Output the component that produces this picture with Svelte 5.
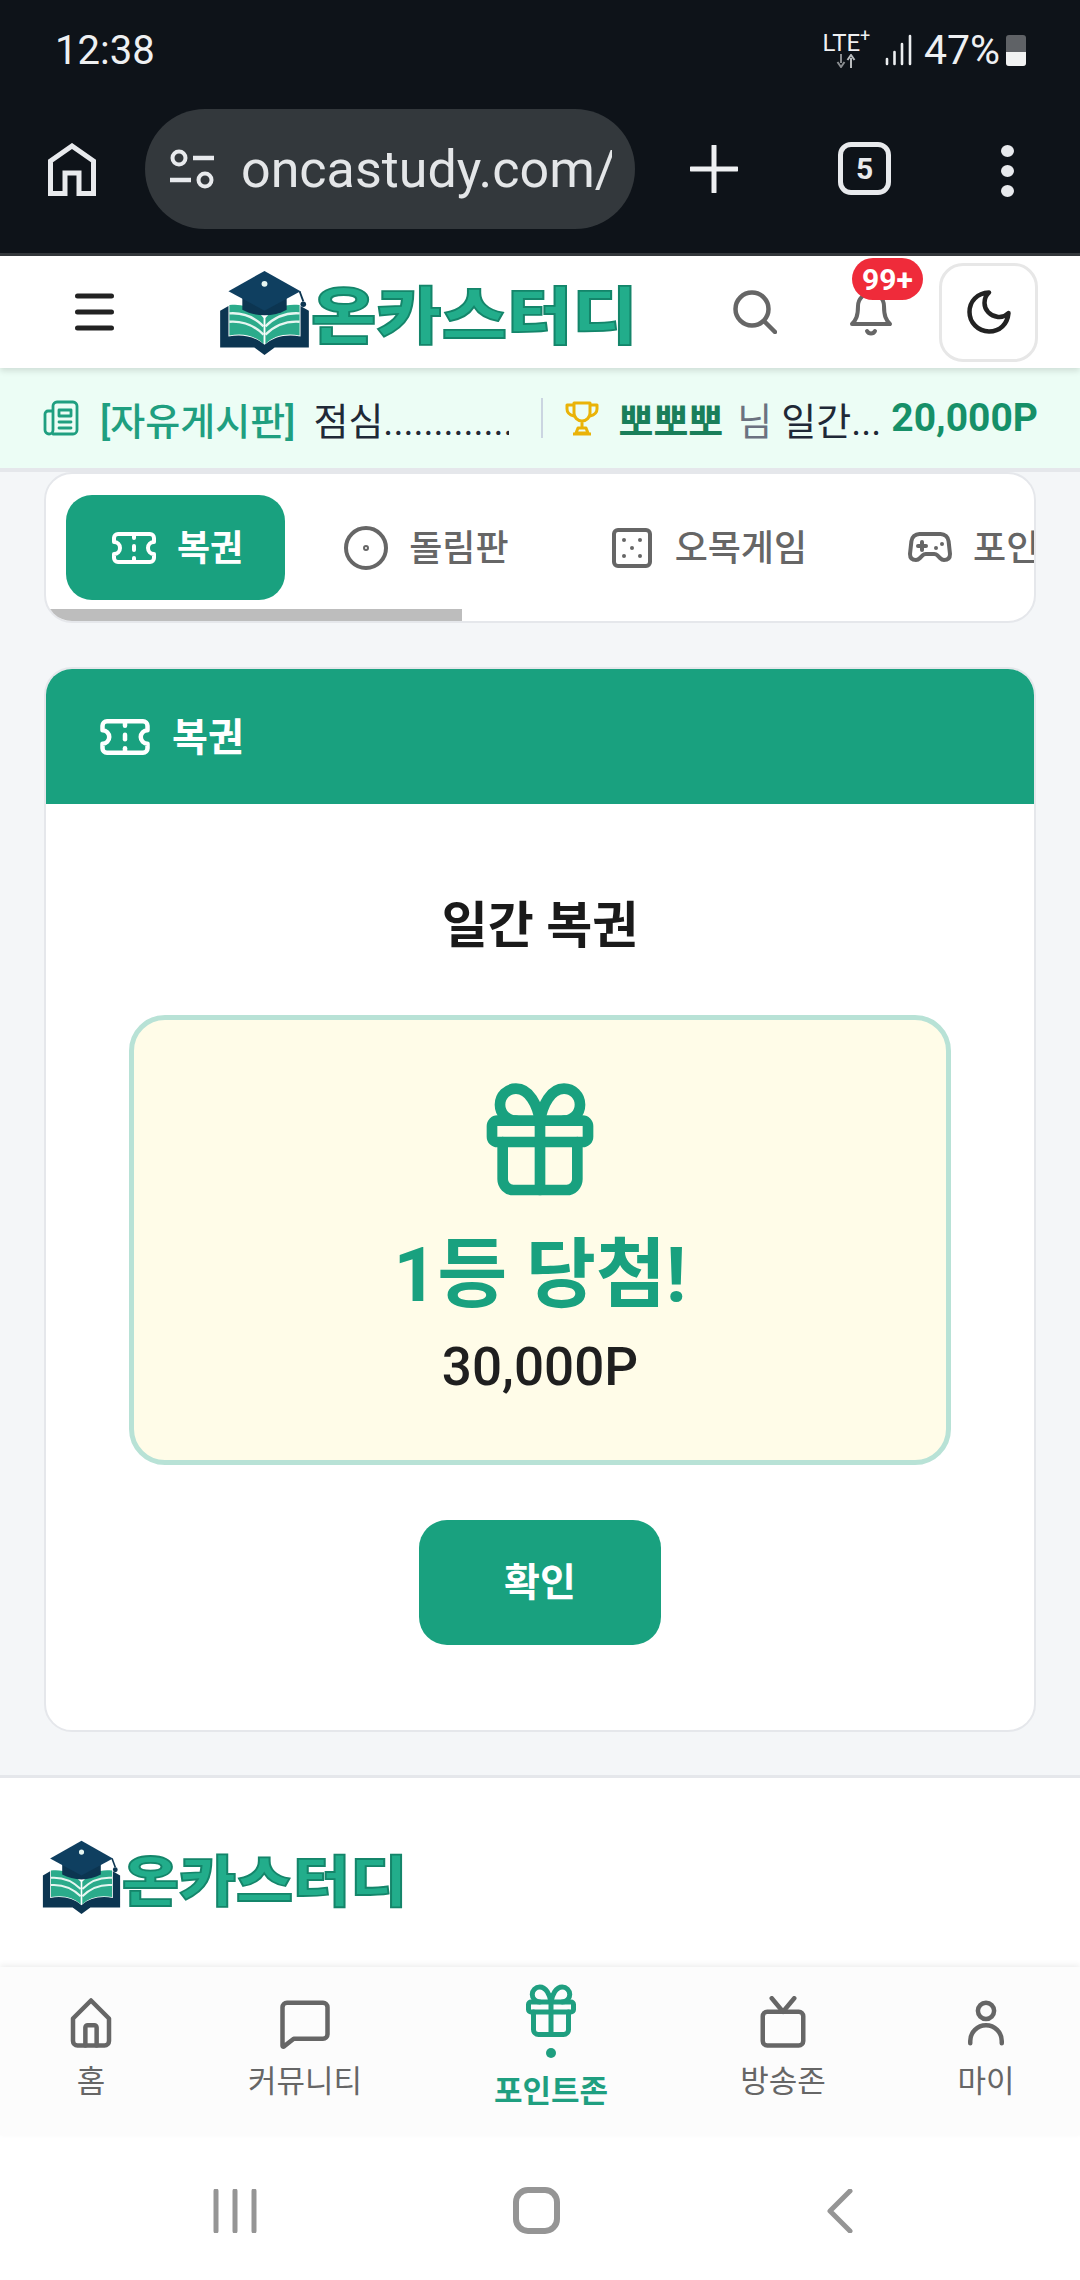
<script>
  const ticket = [
    "M2 9a3 3 0 0 1 0 6v2a2 2 0 0 0 2 2h16a2 2 0 0 0 2-2v-2a3 3 0 0 1 0-6V7a2 2 0 0 0-2-2H4a2 2 0 0 0-2 2Z",
    "M12 5v2",
    "M12 11v2",
    "M12 17v2",
  ];
  const gift = [
    "M4 8h16a1 1 0 0 1 1 1v2a1 1 0 0 1-1 1H4a1 1 0 0 1-1-1V9a1 1 0 0 1 1-1Z",
    "M12 8v13",
    "M19 12v7a2 2 0 0 1-2 2H7a2 2 0 0 1-2-2v-7",
    "M7.5 8a3 3 0 0 1 0-6c2.500 0 4 3 4.500 6 .5-3 2-6 4.500-6a3 3 0 0 1 0 6",
  ];
  const tabs = [
    { label: "복권", active: true, paths: ticket },
    { label: "돌림판", paths: ["M12 2a10 10 0 1 0 0 20a10 10 0 1 0 0-20Z", "M12 11.5a.5.5 0 1 0 0 1a.5.5 0 1 0 0-1Z"] },
    {
      label: "오목게임",
      paths: [
        "M5 3h14a2 2 0 0 1 2 2v14a2 2 0 0 1-2 2H5a2 2 0 0 1-2-2V5a2 2 0 0 1 2-2Z",
        "M8 8h.01",
        "M16 8h.01",
        "M12 12h.01",
        "M8 16h.01",
        "M16 16h.01",
      ],
    },
    {
      label: "포인트",
      paths: [
        "M6 11h4",
        "M8 9v4",
        "M15 12h.01",
        "M18 10h.01",
        "M17.32 5H6.68a4 4 0 0 0-3.98 3.59L2 15c0 2 1 3 3 3 1 0 1.5-.5 2-1l1.41-1.41A2 2 0 0 1 9.83 15h4.34a2 2 0 0 1 1.42.59L17 17c.5.5 1 1 2 1 2 0 3-1 3-3l-.7-6.41A4 4 0 0 0 17.32 5Z",
      ],
    },
  ];
  const navItems = [
    { label: "홈", paths: ["M4 10l8-8 8 8v10a2 2 0 0 1-2 2H6a2 2 0 0 1-2-2Z", "M9.500 22v-8a1 1 0 0 1 1-1h3a1 1 0 0 1 1 1v8"] },
    { label: "커뮤니티", paths: ["M22 17a2 2 0 0 1-2 2H7l-4.5 3.5A.5.5 0 0 1 2 22V5a2 2 0 0 1 2-2h16a2 2 0 0 1 2 2Z"] },
    { label: "포인트존", active: true, paths: gift },
    { label: "방송존", paths: ["M5 7h14a2 2 0 0 1 2 2v11a2 2 0 0 1-2 2H5a2 2 0 0 1-2-2V9a2 2 0 0 1 2-2Z", "M17 1l-5 6-5-6"] },
    { label: "마이", paths: ["M12 3a3.600 3.600 0 1 0 0 7.200a3.600 3.600 0 1 0 0-7.200Z", "M5 21v-1a7 7 0 0 1 14 0v1"] },
  ];
</script>

{#snippet icon(paths, cls)}
  <svg class={cls} viewBox="0 0 24 24" fill="none" stroke="currentColor" stroke-width="2" stroke-linecap="round" stroke-linejoin="round">
    {#each paths as d}<path {d} />{/each}
  </svg>
{/snippet}

{#snippet logo(small)}
  <div class="logo" class:small>
    <svg class="emblem" viewBox="0 0 100 92">
      <path fill="#0c3551" d="M2 84V44l9-5v33c15-3 29 0 39 9 10-9 24-12 39-9V39l9 5v40H61l-11 8-11-8Z" />
      <path fill="#2bab8b" d="M12 38c14-2 28 3 37 14v28c-9-9-23-12-37-9Z" />
      <path fill="#2bab8b" d="M88 38c-14-2-28 3-37 14v28c9-9 23-12 37-9Z" />
      <path fill="none" stroke="#e6f6f1" stroke-width="2.600" d="M12 47c14-1 27 4 37 14M12 56c14-1 27 4 37 14M88 47c-14-1-27 4-37 14M88 56c-14-1-27 4-37 14" />
      <path fill="#0c3551" d="M26 30v13c14 8 34 8 48 0V30Z" />
      <path fill="#0f3f60" d="M50 1l39 22-39 21-39-21Z" />
      <circle cx="50" cy="15" r="3.200" fill="#e6f6f1" />
      <path fill="none" stroke="#0c3551" stroke-width="2" d="M88 23l4 11" />
      <circle cx="92" cy="37" r="3" fill="#0c3551" />
    </svg>
    <span class="logo-text">온카스터디</span>
  </div>
{/snippet}

<div class="phone">
  <div class="status">
    <span class="clock">12:38</span>
    <div class="status-right">
      <div class="lte">
        <span>LTE<sup>+</sup></span>
        <svg viewBox="0 0 22 14" class="lte-arrows">
          <path d="M6 0v9M2.500 8L6 13l3.500-5" stroke="#8a8d90" stroke-width="2" fill="none" />
          <path d="M16 14V4M12.500 6L16 1l3.500 5" stroke="#b9bcbe" stroke-width="2" fill="none" />
        </svg>
      </div>
      <svg viewBox="0 0 27 32" class="signal">
        <path d="M2 25v5M9.500 18v12M17 10v20M25 2v28" stroke="#eceef0" stroke-width="2.600" stroke-linecap="round" />
      </svg>
      <span class="pct">47%</span>
      <div class="battery"><div class="battery-fill"></div></div>
    </div>
  </div>

  <div class="toolbar">
    <svg viewBox="0 0 48 53" class="tb-home">
      <path d="M2.500 50.500V18L24 3l21.500 15v32.500H31V30H17v20.500Z" fill="none" stroke="#e8eaed" stroke-width="5" />
    </svg>
    <div class="url">
      <svg viewBox="0 0 44 40" class="tune">
        <circle cx="9" cy="9" r="6.500" fill="none" stroke="#e8eaed" stroke-width="4" />
        <path d="M23 9h21M0 31h21" stroke="#e8eaed" stroke-width="4.500" />
        <circle cx="35" cy="31" r="6.500" fill="none" stroke="#e8eaed" stroke-width="4" />
      </svg>
      <span class="url-text">oncastudy.com/</span>
    </div>
    <svg viewBox="0 0 48 48" class="tb-plus">
      <path d="M24 1v46M1 24h46" stroke="#eef0f2" stroke-width="5" stroke-linecap="round" />
    </svg>
    <div class="tab-count">5</div>
    <div class="tb-dots"><i></i><i></i><i></i></div>
  </div>

  <div class="header">
    <svg viewBox="0 0 39 38" class="menu">
      <path d="M2.500 3h34M2.500 19h34M2.500 35h34" stroke="#222" stroke-width="5" stroke-linecap="round" />
    </svg>
    {@render logo(false)}
    <svg viewBox="0 0 44 44" class="search">
      <circle cx="19" cy="19" r="16.500" fill="none" stroke="#666" stroke-width="4.500" />
      <path d="M31 31l11 11" stroke="#666" stroke-width="4.500" stroke-linecap="round" />
    </svg>
    <div class="bell">
      <svg viewBox="0 0 44 50">
        <path d="M3 37c4-4 6-8 6-18a13 13 0 0 1 26 0c0 10 2 14 6 18Z" fill="none" stroke="#666" stroke-width="4" stroke-linejoin="round" />
        <path d="M18 44a4.500 4.500 0 0 0 8 0" fill="none" stroke="#666" stroke-width="4" stroke-linecap="round" />
      </svg>
      <span class="badge">99+</span>
    </div>
    <div class="moon-box">
      <svg viewBox="0 0 44 44" class="moon">
        <path d="M22 2.500C10 3 2.500 11.500 2.500 22S11 41.500 22 41.500 40.500 34 41.500 23c-3 3-7 4.500-10.500 4C23 26 17.500 20 17.500 13c0-4 1.500-8 4.500-10.500Z" fill="none" stroke="#222" stroke-width="4.500" stroke-linejoin="round" />
      </svg>
    </div>
  </div>

  <div class="ticker">
    <svg viewBox="0 0 36 36" class="news">
      <path d="M10 34h20a4 4 0 0 0 4-4V6a4 4 0 0 0-4-4H14a4 4 0 0 0-4 4v24a4 4 0 0 1-8 0V14a3 3 0 0 1 3-3h5M16 10h12v6H16ZM16 22h12M16 28h12" fill="none" stroke="#1f9f80" stroke-width="2.800" stroke-linejoin="round" stroke-linecap="round" />
    </svg>
    <span class="t-tag">[자유게시판]</span>
    <span class="t-post">점심.............</span>
    <i class="t-div"></i>
    <svg viewBox="0 0 34 36" class="trophy">
      <path d="M9 3h16v10a8 8 0 0 1-16 0ZM9 5H2v4c0 4 3 6 7 7M25 5h7v4c0 4-3 6-7 7M17 21v7M11 33l2-5h8l2 5Z" fill="none" stroke="#eab308" stroke-width="3" stroke-linejoin="round" />
      <path d="M8 34h18" stroke="#eab308" stroke-width="3" />
    </svg>
    <span class="t-name">뽀뽀뽀</span>
    <span class="t-nim">님</span>
    <span class="t-desc">일간...</span>
    <span class="t-point">20,000P</span>
  </div>

  <div class="content">
    <div class="tabs">
      <div class="tab-row">
        {#each tabs as tab}
          <div class="tab" class:active={tab.active}>
            {@render icon(tab.paths, "tab-icon")}
            <span>{tab.label}</span>
          </div>
        {/each}
      </div>
      <div class="scroll-thumb"></div>
    </div>

    <div class="card">
      <div class="card-head">
        {@render icon(ticket, "head-icon")}
        <span>복권</span>
      </div>
      <div class="card-body">
        <h2>일간 복권</h2>
        <div class="prize">
          {@render icon(gift, "prize-icon")}
          <div class="prize-title">1등 당첨!</div>
          <div class="prize-amount">30,000P</div>
        </div>
        <button class="confirm">확인</button>
      </div>
    </div>
  </div>

  <div class="footer">
    {@render logo(true)}
  </div>

  <div class="nav">
    {#each navItems as item}
      <div class="nav-item" class:active={item.active}>
        {@render icon(item.paths, "nav-icon")}
        {#if item.active}<i class="nav-dot"></i>{/if}
        <span>{item.label}</span>
      </div>
    {/each}
  </div>

  <div class="sysnav">
    <svg viewBox="0 0 44 44" class="sys-recent">
      <path d="M3 2v40M22 2v40M41 2v40" stroke="#959595" stroke-width="5" stroke-linecap="round" />
    </svg>
    <div class="sys-home"></div>
    <svg viewBox="0 0 27 44" class="sys-back">
      <path d="M24 2L4 22l20 20" fill="none" stroke="#959595" stroke-width="5" stroke-linecap="round" stroke-linejoin="round" />
    </svg>
  </div>
</div>

<style>
  :global(body) {
    margin: 0;
    background: #fff;
  }
  .phone {
    width: 1080px;
    height: 2280px;
    overflow: hidden;
    display: flex;
    flex-direction: column;
    font-family: Roboto, "Noto Sans CJK KR", sans-serif;
    color: #1a1a1a;
  }

  .status {
    height: 100px;
    flex: none;
    background: #0e1319;
    color: #eef0f2;
    display: flex;
    align-items: center;
    justify-content: space-between;
    padding: 0 54px 0 55px;
    box-sizing: border-box;
  }
  .clock {
    font-size: 40px;
  }
  .pct {
    font-size: 41px;
  }
  .status-right {
    display: flex;
    align-items: center;
  }
  .lte {
    width: 53px;
    display: flex;
    flex-direction: column;
    align-items: center;
    font-size: 24px;
    line-height: 22px;
    margin-right: 12px;
  }
  .lte sup {
    font-size: 18px;
    line-height: 0;
  }
  .lte-arrows {
    width: 22px;
    height: 14px;
  }
  .signal {
    width: 27px;
    height: 32px;
    margin-right: 12px;
  }
  .battery {
    width: 20px;
    height: 31px;
    margin-left: 6px;
    background: #5f6266;
    border-radius: 3px;
    display: flex;
    align-items: flex-end;
    overflow: hidden;
  }
  .battery-fill {
    width: 100%;
    height: 14px;
    background: #f1f2f2;
  }

  .toolbar {
    height: 156px;
    flex: none;
    background: #0e1319;
    border-bottom: 3px solid #34383c;
    box-sizing: border-box;
    display: flex;
    align-items: flex-start;
    padding-top: 9px;
  }
  .tb-home {
    width: 48px;
    height: 53px;
    margin: 34px 49px 0 48px;
  }
  .url {
    width: 490px;
    height: 120px;
    border-radius: 60px;
    background: #33383c;
    display: flex;
    align-items: center;
    padding: 0 23px 0 25px;
    box-sizing: border-box;
    overflow: hidden;
    color: #e4e6e8;
  }
  .tune {
    width: 44px;
    height: 40px;
    flex: none;
    margin-right: 27px;
  }
  .url-text {
    font-size: 52px;
    white-space: nowrap;
    overflow: hidden;
  }
  .tb-plus {
    width: 48px;
    height: 48px;
    margin: 36px 0 0 55px;
  }
  .tab-count {
    width: 53px;
    height: 53px;
    box-sizing: border-box;
    border: 5px solid #e8eaed;
    border-radius: 13px;
    margin: 33px 0 0 100px;
    color: #e8eaed;
    font-size: 30px;
    font-weight: 700;
    display: flex;
    align-items: center;
    justify-content: center;
  }
  .tb-dots {
    margin: 36px 0 0 110px;
    display: flex;
    flex-direction: column;
    gap: 8px;
  }
  .tb-dots i {
    width: 13px;
    height: 12px;
    border-radius: 50%;
    background: #e8eaed;
  }

  .header {
    height: 112px;
    flex: none;
    background: #fff;
    display: flex;
    align-items: center;
    position: relative;
    z-index: 2;
    box-shadow: 0 3px 6px rgba(0, 0, 0, 0.12);
  }
  .menu {
    width: 39px;
    height: 38px;
    margin-left: 75px;
    margin-right: 104px;
  }
  .logo {
    display: flex;
    align-items: center;
    width: 417px;
    flex: none;
  }
  .emblem {
    width: 93px;
    height: 85px;
    flex: none;
  }
  .logo-text {
    font-family: "Noto Sans CJK KR", sans-serif;
    font-weight: 900;
    font-size: 71px;
    line-height: 1;
    white-space: nowrap;
    color: #22ad8b;
    -webkit-text-stroke: 2px #14856a;
    transform: scaleY(0.88);
  }
  .logo.small {
    width: 362px;
  }
  .logo.small .emblem {
    width: 81px;
    height: 74px;
  }
  .logo.small .logo-text {
    font-size: 62px;
  }
  .search {
    width: 44px;
    height: 44px;
    margin-left: 98px;
    flex: none;
  }
  .bell {
    width: 44px;
    height: 50px;
    margin-left: 72px;
    flex: none;
    position: relative;
  }
  .bell svg {
    width: 44px;
    height: 50px;
    display: block;
  }
  .badge {
    position: absolute;
    top: -29px;
    left: 3px;
    width: 71px;
    height: 42px;
    border-radius: 21px;
    background: #ef2b3a;
    color: #fff;
    font-size: 30px;
    font-weight: 700;
    display: flex;
    align-items: center;
    justify-content: center;
  }
  .moon-box {
    width: 99px;
    height: 99px;
    box-sizing: border-box;
    border: 3px solid #e7e7e7;
    border-radius: 24px;
    margin-left: 46px;
    flex: none;
    display: flex;
    align-items: center;
    justify-content: center;
  }
  .moon {
    width: 44px;
    height: 44px;
  }

  .ticker {
    height: 100px;
    background: #ecfdf5;
    display: flex;
    align-items: center;
    font-size: 38px;
    white-space: nowrap;
    color: #1f2937;
    flex: none;
  }
  .news {
    width: 36px;
    height: 36px;
    margin-left: 43px;
  }
  .t-tag {
    margin-left: 21px;
    color: #1f9f80;
    font-weight: 500;
  }
  .t-post {
    margin-left: 18px;
    width: 196px;
    overflow: hidden;
  }
  .t-div {
    width: 2px;
    height: 40px;
    background: #cbd5e1;
    margin: 0 22px 0 32px;
  }
  .trophy {
    width: 34px;
    height: 36px;
  }
  .t-name {
    margin-left: 19px;
    color: #1a7f5a;
    font-weight: 700;
  }
  .t-nim {
    margin-left: 14px;
    color: #6b7280;
  }
  .t-desc {
    margin-left: 9px;
    width: 92px;
  }
  .t-point {
    margin-left: 18px;
    color: #169068;
    font-size: 39px;
    font-weight: 700;
  }

  .content {
    flex: 1;
    background: #f4f6f8;
    border-top: 4px solid #e5e7eb;
    border-bottom: 3px solid #e5e7eb;
    padding: 0 44px;
    min-height: 0;
  }
  .tabs {
    background: #fff;
    border: 2px solid #e5e7eb;
    border-radius: 28px;
    overflow: hidden;
    height: 151px;
    box-sizing: border-box;
  }
  .tab-row {
    display: flex;
    gap: 13px;
    padding: 21px 0 0 20px;
    white-space: nowrap;
  }
  .tab {
    height: 105px;
    flex: none;
    padding: 0 42px 0 44px;
    border-radius: 26px;
    display: flex;
    align-items: center;
    gap: 19px;
    font-size: 36px;
    font-weight: 500;
    color: #666;
  }
  .tab span {
    margin-top: -5px;
  }
  .tab.active {
    background: #19a17f;
    color: #fff;
    font-weight: 700;
  }
  :global(.tab-icon) {
    width: 48px;
    height: 48px;
    flex: none;
  }
  .scroll-thumb {
    width: 416px;
    height: 12px;
    margin-top: 9px;
    background: #bdbdbd;
  }

  .card {
    margin-top: 44px;
    background: #fff;
    border: 2px solid #e5e7eb;
    border-radius: 28px;
    overflow: hidden;
    height: 1065px;
    box-sizing: border-box;
  }
  .card-head {
    height: 135px;
    background: #19a17f;
    color: #fff;
    display: flex;
    align-items: center;
    gap: 20px;
    padding: 0 0 0 52px;
    font-size: 39px;
    font-weight: 700;
  }
  .card-head span {
    margin-top: -5px;
  }
  :global(.head-icon) {
    width: 54px;
    height: 54px;
    flex: none;
  }
  .card-body {
    display: flex;
    flex-direction: column;
    align-items: center;
  }
  h2 {
    margin: 87px 0 0;
    font-size: 50px;
    font-weight: 700;
    line-height: 70px;
  }
  .prize {
    margin-top: 54px;
    width: 822px;
    height: 450px;
    box-sizing: border-box;
    border: 5px solid #b8e2d6;
    border-radius: 36px;
    background: #fffce8;
    display: flex;
    flex-direction: column;
    align-items: center;
    padding-top: 58px;
    color: #19a17f;
  }
  :global(.prize-icon) {
    width: 128px;
    height: 128px;
    flex: none;
    display: block;
  }
  .prize-title {
    font-size: 76px;
    font-weight: 700;
    line-height: 90px;
    margin-top: 24px;
  }
  .prize-amount {
    font-size: 53px;
    font-weight: 500;
    line-height: 70px;
    margin-top: 12px;
    color: #1f1f1f;
  }
  .confirm {
    margin-top: 55px;
    width: 242px;
    height: 125px;
    border: 0;
    border-radius: 28px;
    background: #19a17f;
    color: #fff;
    font-family: inherit;
    font-size: 39px;
    font-weight: 700;
    padding: 0 0 7px;
  }

  .footer {
    height: 189px;
    flex: none;
    background: #fff;
    padding: 62px 0 0 41px;
    box-sizing: border-box;
  }

  .nav {
    height: 168px;
    flex: none;
    background: #fcfcfc;
    display: grid;
    grid-template-columns: 182px 246px 246px 218px 188px;
    box-shadow: 0 -2px 6px rgba(0, 0, 0, 0.07);
    position: relative;
  }
  .nav-item {
    display: flex;
    flex-direction: column;
    align-items: center;
    padding-top: 29px;
    color: #666;
    font-size: 31px;
    line-height: 40px;
  }
  :global(.nav-icon) {
    width: 54px;
    height: 54px;
    flex: none;
    margin-bottom: 12px;
  }
  .nav-item.active {
    padding-top: 15px;
    color: #1f9f80;
    font-weight: 700;
  }
  .nav-item.active :global(.nav-icon) {
    width: 60px;
    height: 60px;
    margin-bottom: 6px;
  }
  .nav-dot {
    width: 10px;
    height: 10px;
    border-radius: 50%;
    background: #1f9f80;
    margin-bottom: 14px;
  }

  .sysnav {
    height: 145px;
    flex: none;
    background: #fff;
    display: flex;
    align-items: flex-start;
    padding-top: 54px;
    box-sizing: border-box;
  }
  .sys-recent {
    width: 44px;
    height: 44px;
    margin-left: 213px;
    flex: none;
  }
  .sys-home {
    width: 47px;
    height: 47px;
    box-sizing: border-box;
    border: 6px solid #959595;
    border-radius: 15px;
    margin: -2px 0 0 256px;
    flex: none;
  }
  .sys-back {
    width: 27px;
    height: 44px;
    margin-left: 266px;
    flex: none;
  }
</style>
